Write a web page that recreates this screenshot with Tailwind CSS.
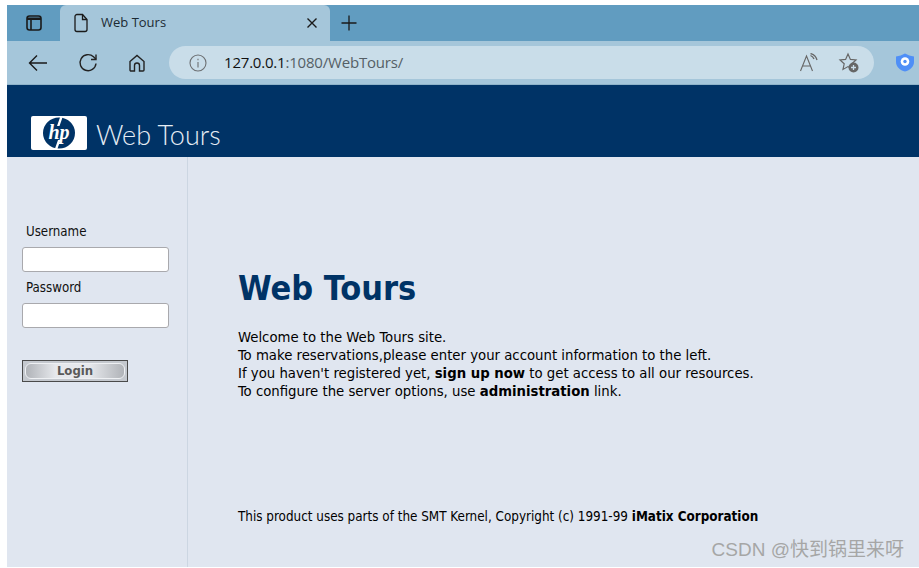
<!DOCTYPE html>
<html>
<head>
<meta charset="utf-8">
<script src="https://cdn.jsdelivr.net/npm/@tailwindcss/browser@4"></script>
</head>
<body class="bg-white overflow-hidden">
<div class="w-[919px] h-[568px] pl-[7px] pt-[5px] pb-[1px] flex flex-col font-['DejaVu_Sans_Condensed','DejaVu_Sans',sans-serif] text-black">
  <!-- tab strip -->
  <div class="h-[36px] bg-[#619cc0] flex items-end relative shrink-0">
    <div class="w-[53px] h-[36px] flex items-center justify-center">
      <svg width="18" height="18" viewBox="0 0 18 18" fill="none" stroke="#1a1a1a" stroke-width="1.6"><rect x="2" y="2" width="14" height="14" rx="2.5"/><path d="M6 6v10" /><path d="M2 3.5h14v2.5H2z" fill="#1a1a1a" stroke="none"/></svg>
    </div>
    <div class="w-[270px] h-[36px] bg-[#a5c6da] rounded-t-[6px] flex items-center">
      <svg class="ml-[12px]" width="18" height="20" viewBox="0 0 18 20" fill="none" stroke="#1a1a1a" stroke-width="1.3"><path d="M3 3.5a2 2 0 0 1 2-2h5.500L15 6.500V16.500a2 2 0 0 1-2 2H5a2 2 0 0 1-2-2z"/><path d="M10.500 1.500V6.500H15"/></svg>
      <span class="ml-[11px] -mt-[1px] text-[13px] text-[#1c2a33] font-['Open_Sans',sans-serif] leading-none">Web Tours</span>
      <svg class="ml-auto mr-[12px]" width="12" height="12" viewBox="0 0 12 12" stroke="#1a1a1a" stroke-width="1.4"><path d="M1.500 1.500l9 9M10.500 1.500l-9 9"/></svg>
    </div>
    <div class="w-[38px] h-[36px] flex items-center justify-center">
      <svg width="18" height="18" viewBox="0 0 18 18" stroke="#1a1a1a" stroke-width="1.3"><path d="M9 1.500v15M1.500 9h15"/></svg>
    </div>
  </div>
  <!-- toolbar -->
  <div class="h-[44px] bg-[#a5c6da] border-b border-[#8fb3c9] flex items-center relative shrink-0">
    <svg class="ml-[21px]" width="20" height="18" viewBox="0 0 20 18" fill="none" stroke="#1a1a1a" stroke-width="1.4"><path d="M19 9H1.500M9 1.500L1.500 9 9 16.500"/></svg>
    <svg class="ml-[30px]" width="20" height="20" viewBox="0 0 20 20" fill="none" stroke="#222" stroke-width="1.4"><path d="M18 10.500A8 8 0 1 1 15.500 3.800L18 6.200"/><path d="M18 1.500V6.500H13"/></svg>
    <svg class="ml-[29px]" width="20" height="20" viewBox="0 0 20 20" fill="none" stroke="#222" stroke-width="1.4"><path d="M3 8.500L10 2.500l7 6V17a1 1 0 0 1-1 1h-3.500v-5.500a2.500 2.500 0 0 0-5 0V18H4a1 1 0 0 1-1-1z"/></svg>
    <div class="ml-[22px] w-[705px] h-[33px] rounded-full bg-[#c9dde9] flex items-center">
      <svg class="ml-[20px]" width="18" height="18" viewBox="0 0 18 18" fill="none" stroke="#6c6f72" stroke-width="1.1"><circle cx="9" cy="9" r="8"/><path d="M9 8v5.500M9 4.800v1.400"/></svg>
      <span class="ml-[17px] -mt-[1px] text-[15px] leading-none font-['Open_Sans',sans-serif] tracking-[-0.2px] text-[#111]">127.0.0.1<span class="text-[#555f66]">:1080/WebTours/</span></span>
      <svg class="ml-auto" width="20" height="20" viewBox="0 0 20 20" fill="none" stroke="#666" stroke-width="1.1"><path d="M1.500 18L7.500 3l6 15M3.500 13h8"/><path d="M11.500 2.500a6 6 0 0 1 3.500 3.500M11.500 0.500a9 9 0 0 1 6.500 6.500" stroke-width="1.300"/></svg>
      <svg class="ml-[19px] mr-[14px]" width="22" height="22" viewBox="0 0 22 22" fill="none"><path d="M10 2l2.400 5.400 5.600.6-4.200 3.800 1.200 5.600L10 14.600 5 17.400l1.200-5.600L2 8l5.600-.6z" stroke="#666" stroke-width="1.200"/><circle cx="15.500" cy="15.500" r="5" fill="#666"/><path d="M15.500 13v5M13 15.500h5" stroke="#c9dde9" stroke-width="1.300"/></svg>
    </div>
    <svg class="ml-[22px]" width="18" height="19" viewBox="0 0 18 19"><path d="M0 3.500C3.500 3 6 2 9 0.500c3 1.500 5.500 2.500 9 3V9c0 4.500-4 8.500-9 9.500C4 17.500 0 13.500 0 9z" fill="#4f8ff7"/><circle cx="9" cy="8.500" r="4.300" fill="#fff"/><circle cx="9" cy="8.500" r="1.700" fill="#4f8ff7"/></svg>
  </div>
  <!-- site header -->
  <div class="h-[72px] bg-[#003366] flex items-end pb-[7px] pl-[24px] shrink-0">
    <div class="w-[56px] h-[34px] bg-white rounded-[2px] flex items-center justify-center">
      <svg width="36" height="34" viewBox="0 0 36 34"><ellipse cx="18" cy="17" rx="16" ry="15.500" fill="#003366"/><path d="M19.500 0h2.500l-3.500 10h-2.500zM17 24h2.500L16 34h-2.500z" fill="#fff"/><text x="18" y="22.500" text-anchor="middle" font-family="Liberation Serif" font-style="italic" font-weight="700" font-size="20" fill="#fff">hp</text></svg>
    </div>
    <span class="ml-[9px] -mb-[1px] text-[27px] leading-[32px] text-[#e6edf4] font-['Lato',sans-serif] font-light">Web Tours</span>
  </div>
  <!-- body -->
  <div class="flex-1 flex bg-[#e0e6f0] min-h-0">
    <div class="w-[181px] shrink-0 border-r border-[#ccd6e2] pt-[67px] pl-[15px] text-[13.200px] leading-[16px] text-[#111]">
      <div class="pl-[4px]">Username</div>
      <div class="mt-[7px] w-[147px] h-[25px] bg-white border border-[#a9a9ad] rounded-[3px]"></div>
      <div class="mt-[8px] pl-[4px]">Password</div>
      <div class="mt-[7px] w-[147px] h-[25px] bg-white border border-[#a9a9ad] rounded-[3px]"></div>
      <div class="mt-[32px] w-[106px] h-[22px] border border-[#4a4a4a] bg-[#c4c8ce] p-[2px]">
        <div class="h-full rounded-[6px] border border-[#eef0f3] bg-[linear-gradient(90deg,#b0b3b8,#e6e8ec_30%,#e6e8ec_65%,#b0b3b8)] flex items-center justify-center font-bold text-[13px] text-[#5a5a5a]">Login</div>
      </div>
    </div>
    <div class="flex-1 pl-[50px] pt-[109px] text-[14.750px] leading-[18px] text-black relative">
      <h1 class="text-[34px] leading-[44px] font-bold text-[#003366]">Web Tours</h1>
      <p class="mt-[18px]">Welcome to the Web Tours site.<br>To make reservations,please enter your account information to the left.<br>If you haven't registered yet, <b>sign up now</b> to get access to all our resources.<br>To configure the server options, use <b>administration</b> link.</p>
      <p class="mt-[108px] text-[13.350px]">This product uses parts of the SMT Kernel, Copyright (c) 1991-99 <b>iMatix Corporation</b></p>
      <div class="absolute right-[15px] bottom-[5px] text-[19px] leading-[24px] text-[#a6a6a6] font-['Liberation_Sans','Noto_Sans_CJK_SC',sans-serif]">CSDN @快到锅里来呀</div>
    </div>
  </div>
</div>
</body>
</html>
